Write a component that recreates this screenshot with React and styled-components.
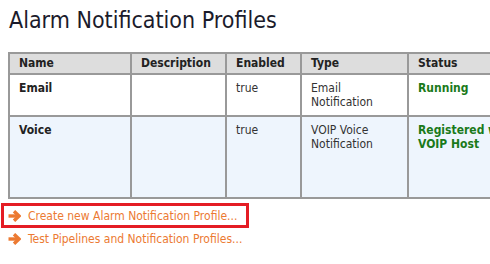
import React from "react";
import styled, { createGlobalStyle } from "styled-components";

const Global = createGlobalStyle`
  html, body { margin: 0; padding: 0; background: #fff; overflow: hidden; }
  body { font-family: "DejaVu Sans Condensed", "DejaVu Sans", sans-serif; }
`;

const Page = styled.div`
  width: 490px;
  height: 264px;
  overflow: hidden;
  padding: 0 0 0 8px;
  box-sizing: border-box;
`;

const Title = styled.h1`
  margin: 0;
  padding: 5px 0 0 1px;
  height: 45px;
  box-sizing: border-box;
  font-family: "DejaVu Sans Condensed", "DejaVu Sans", sans-serif;
  font-weight: normal;
  font-size: 23px;
  color: #1b1b2b;
  line-height: 30px;
`;

const Table = styled.table`
  margin-top: 7px;
  border-collapse: collapse;
  width: 560px;
  table-layout: fixed;
  font-size: 12px;
  color: #333;
  border: 2px solid #999;
`;

const Th = styled.th`
  background: #dddddd;
  border: 2px solid #999;
  text-align: left;
  font-weight: bold;
  color: #222;
  padding: 2px 9px 2px 9px;
  height: 15px;
  line-height: 15px;
`;

const Tr = styled.tr`
  background: ${(p) => (p.$alt ? "#eef5fd" : "#ffffff")};
  height: ${(p) => p.$h}px;
`;

const Td = styled.td`
  border: 2px solid #999;
  vertical-align: top;
  padding: 6px 9px;
  line-height: 14px;
  font-weight: ${(p) => (p.$bold ? "bold" : "normal")};
  color: ${(p) => (p.$status ? "#1a7a1a" : p.$bold ? "#222" : "#333")};
  overflow: hidden;
  white-space: nowrap;
`;

const Links = styled.div`
  margin-top: 4px;
  margin-left: -7px;
  display: flex;
  flex-direction: column;
`;

const LinkRow = styled.a`
  display: flex;
  align-items: center;
  gap: 7px;
  width: ${(p) => (p.$boxed ? "238px" : "auto")};
  height: ${(p) => (p.$boxed ? "19px" : "21px")};
  padding-left: ${(p) => (p.$boxed ? "4px" : "7px")};
  border: ${(p) => (p.$boxed ? "3px solid #e41c24" : "0")};
  box-sizing: content-box;
  color: #ec7a32;
  font-size: 12px;
  text-decoration: none;
  white-space: nowrap;
`;

const Arrow = () => (
  <svg width="13" height="12" viewBox="0 0 13 12">
    <path d="M0.5 6 H10" stroke="#ec7a32" strokeWidth="3.4" />
    <path d="M6 1.2 L11 6 L6 10.8" stroke="#ec7a32" strokeWidth="3.4" fill="none" strokeLinejoin="miter" />
  </svg>
);

export default function App() {
  return (
    <Page>
      <Global />
      <Title>Alarm Notification Profiles</Title>
      <Table>
        <colgroup>
          <col style={{ width: 122 }} />
          <col style={{ width: 95 }} />
          <col style={{ width: 75 }} />
          <col style={{ width: 107 }} />
          <col />
        </colgroup>
        <thead>
          <tr>
            <Th>Name</Th>
            <Th>Description</Th>
            <Th>Enabled</Th>
            <Th>Type</Th>
            <Th>Status</Th>
          </tr>
        </thead>
        <tbody>
          <Tr $h={41}>
            <Td $bold>Email</Td>
            <Td></Td>
            <Td>true</Td>
            <Td>Email<br />Notification</Td>
            <Td $bold $status>Running</Td>
          </Tr>
          <Tr $alt $h={82}>
            <Td $bold>Voice</Td>
            <Td></Td>
            <Td>true</Td>
            <Td>VOIP Voice<br />Notification</Td>
            <Td $bold $status>Registered with<br />VOIP Host</Td>
          </Tr>
        </tbody>
      </Table>
      <Links>
        <LinkRow $boxed href="#"><Arrow />Create new Alarm Notification Profile...</LinkRow>
        <LinkRow href="#"><Arrow />Test Pipelines and Notification Profiles...</LinkRow>
      </Links>
    </Page>
  );
}
